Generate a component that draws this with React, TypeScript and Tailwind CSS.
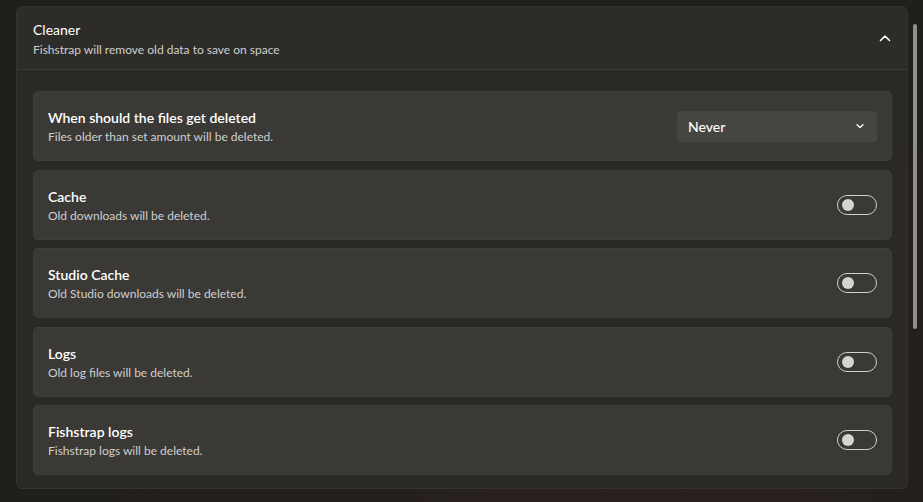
import { useState } from 'react';

type CleanerOption = {
  key: string;
  title: string;
  description: string;
};

const options: CleanerOption[] = [
  { key: 'cache', title: 'Cache', description: 'Old downloads will be deleted.' },
  { key: 'studio', title: 'Studio Cache', description: 'Old Studio downloads will be deleted.' },
  { key: 'logs', title: 'Logs', description: 'Old log files will be deleted.' },
  { key: 'fishstrap', title: 'Fishstrap logs', description: 'Fishstrap logs will be deleted.' },
];

const Toggle = ({ on, onChange }: { on: boolean; onChange: () => void }) => (
  <button
    onClick={onChange}
    className={`flex h-[20px] w-[40px] items-center rounded-full border px-[4px] ${
      on ? 'justify-end border-transparent bg-[#60cdff]' : 'justify-start border-[#cfcfcf] bg-transparent'
    }`}
  >
    <span className={`block h-[12px] w-[12px] rounded-full ${on ? 'bg-black' : 'bg-[#d4d4d4]'}`} />
  </button>
);

const CardText = ({ title, description }: { title: string; description: string }) => (
  <div className="mt-[2px] flex flex-col">
    <span className="text-[14px] leading-[20px] font-semibold text-white">{title}</span>
    <span className="text-[12px] leading-[18px] text-[#cfcfcf]">{description}</span>
  </div>
);

export default function App() {
  const [enabled, setEnabled] = useState<Record<string, boolean>>({});

  return (
    <div
      className="relative h-[502px] w-[923px] overflow-hidden bg-[#211f1c] pt-[6px] pl-[16px]"
      style={{ fontFamily: '"Segoe UI", Lato, "Noto Sans", sans-serif' }}
    >
      <div className="pointer-events-none absolute inset-0 bg-[radial-gradient(ellipse_at_70%_95%,rgba(70,40,35,0.25),transparent_60%)]" />

      <div className="relative flex h-[483px] w-[892px] flex-col overflow-hidden rounded-[6px] border border-[#353330] bg-[#2a2926]">
        {/* expander header */}
        <div className="flex h-[63px] items-center justify-between border-b border-[#3e3c39] bg-[#2e2c29] pr-[15px] pl-[16px]">
          <div className="mt-[2px] flex flex-col">
            <span className="text-[14px] leading-[20px] text-white">Cleaner</span>
            <span className="text-[12px] leading-[19px] text-[#cfcfcf]">
              Fishstrap will remove old data to save on space
            </span>
          </div>
          <svg width="14" height="14" viewBox="0 0 14 14" fill="none">
            <path d="M2.5 9.5 L7 5 L11.5 9.5" stroke="white" strokeWidth="1.6" strokeLinecap="round" strokeLinejoin="round" />
          </svg>
        </div>

        <div className="flex flex-col gap-[8.5px] pr-[15px] pl-[16px] pt-[21px]">
          <div className="flex h-[70px] items-center justify-between rounded-[5px] border border-[#3f3e3b] bg-[#3a3936] pr-[14px] pl-[14px]">
            <CardText title="When should the files get deleted" description="Files older than set amount will be deleted." />
            <div className="flex h-[31px] w-[200px] items-center justify-between rounded-[4px] bg-[#454541] pr-[12px] pl-[11px]">
              <span className="text-[14px] font-medium text-white">Never</span>
              <svg width="10" height="10" viewBox="0 0 10 10" fill="none">
                <path d="M2 3.8 L5 6.6 L8 3.8" stroke="white" strokeWidth="1.3" strokeLinecap="round" strokeLinejoin="round" />
              </svg>
            </div>
          </div>

          {options.map((opt) => (
            <div
              key={opt.key}
              className="flex h-[70px] items-center justify-between rounded-[5px] border border-[#3f3e3b] bg-[#3a3936] pr-[14px] pl-[14px]"
            >
              <CardText title={opt.title} description={opt.description} />
              <Toggle
                on={!!enabled[opt.key]}
                onChange={() => setEnabled((s) => ({ ...s, [opt.key]: !s[opt.key] }))}
              />
            </div>
          ))}
        </div>
      </div>

      {/* scrollbar thumb */}
      <div className="absolute top-[24px] left-[913px] h-[305px] w-[4px] rounded-full bg-[#8f8f8f]" />
    </div>
  );
}
